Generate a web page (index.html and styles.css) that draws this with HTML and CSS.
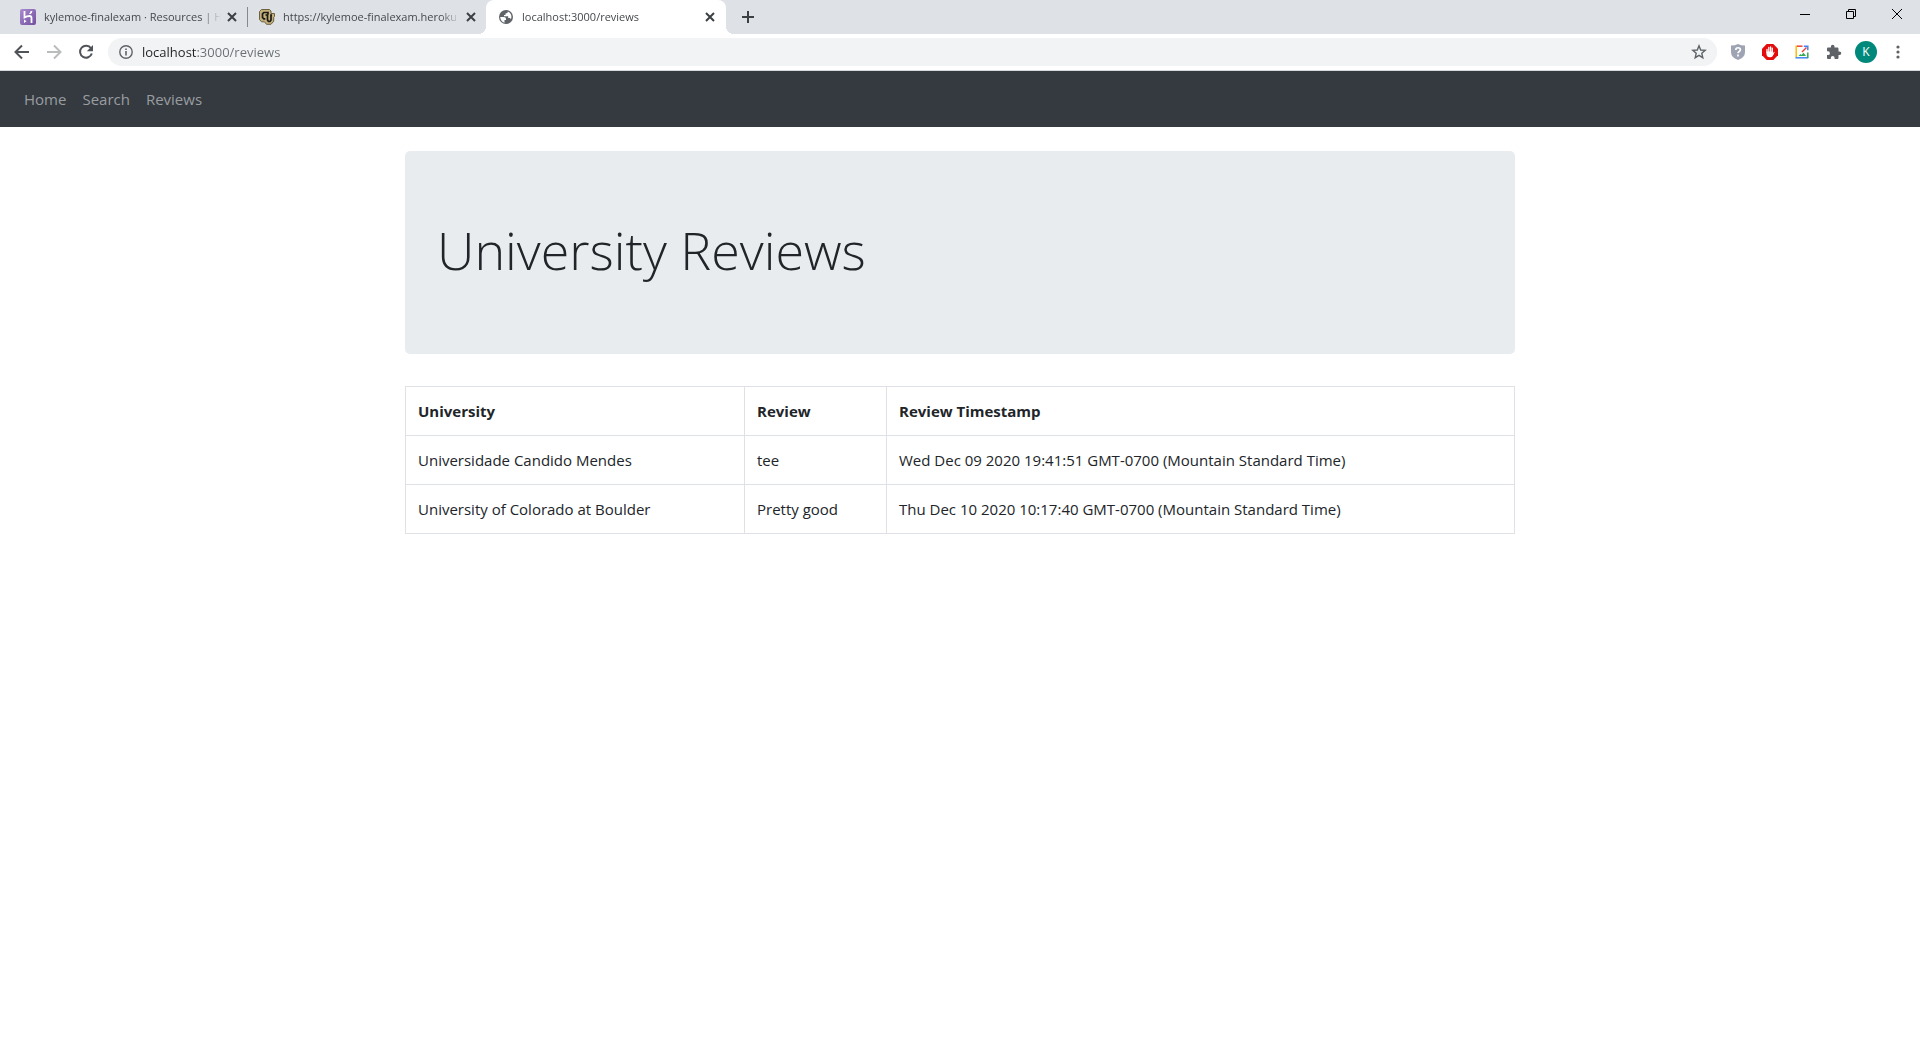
FILE: index.html
```html
<!DOCTYPE html>
<html lang="en">
<head>
<meta charset="utf-8">
<meta name="viewport" content="width=device-width, initial-scale=1">
<title>University Reviews</title>
<link rel="stylesheet" href="styles.css">
</head>
<body>
<div class="browser">
  <div class="tabstrip">
    <div class="tab">
      <svg class="icon" width="16" height="16" viewBox="0 0 16 16"><defs><linearGradient id="hg" x1="0" y1="0" x2="1" y2="1"><stop offset="0" stop-color="#a98bd0"/><stop offset="1" stop-color="#73509f"/></linearGradient></defs><rect width="16" height="16" rx="2" fill="url(#hg)"/><path d="M4.500 2v6.500C6 7.600 8 7 9.500 7 11 7 11.500 7.800 11.500 9v5" fill="none" stroke="#fff" stroke-width="1.800"/><path d="M4 10.500 6.500 12.300 4 14zM9 5c1-1 1.500-2 1.600-3h1.800c-.2 1.300-.8 2.200-1.500 3z" fill="#fff"/></svg>
      <button class="tab-title">kylemoe-finalexam · Resources | H</button>
      <button class="tab-close" aria-label="Close tab"><svg width="10" height="10" viewBox="0 0 10 10"><path d="M1 1l8 8M9 1l-8 8"/></svg></button>
    </div>
    <div class="tab divided">
      <svg class="icon" width="16" height="16" viewBox="0 0 16 16"><path d="M2.500.5h8l1.500 1.500v2.500h3.500v3l-.8.8v4l-2.700 3H7.500l-2-2.500H2.500L.5 10.500v-8z" fill="#c3b07a" stroke="#6b6040" stroke-width="1"/><path d="M9 5.500V3.500H4.800L3.500 4.800v3.700l1.300 1.300h1.500M6.500 6h2v5l1 1.500h1.500l1-1.500V6H13" fill="none" stroke="#1c1a16" stroke-width="1.700"/></svg>
      <button class="tab-title">https://kylemoe-finalexam.heroku</button>
      <button class="tab-close" aria-label="Close tab"><svg width="10" height="10" viewBox="0 0 10 10"><path d="M1 1l8 8M9 1l-8 8"/></svg></button>
    </div>
    <div class="tab active">
      <svg class="icon" width="16" height="16" viewBox="0 0 16 16"><circle cx="8" cy="8" r="7" fill="#5f6368"/><path d="M2.200 8h3.600c1.500 0 2.200.7 2.200 2v1H6.500v2.800C4 13.300 2.300 11 2.200 8zM9.800 2.500C9.800 4 9 4.400 7.500 4.400V6H6v1.200h4.200v1.900h1.300c.8 0 1.200.6 1.200 1.300 1.600-2.800.6-6.500-2.900-7.900z" fill="#fff"/></svg>
      <button class="tab-title">localhost:3000/reviews</button>
      <button class="tab-close" aria-label="Close tab"><svg width="10" height="10" viewBox="0 0 10 10"><path d="M1 1l8 8M9 1l-8 8"/></svg></button>
    </div>
    <button class="new-tab" aria-label="New tab"><svg width="12" height="12" viewBox="0 0 12 12"><path d="M6 0v12M0 6h12" stroke="#3c4043" stroke-width="2"/></svg></button>
    <div class="window-controls">
      <button aria-label="Minimize"><svg width="10" height="10" viewBox="0 0 10 10"><path d="M0 5.500h10"/></svg></button>
      <button aria-label="Restore"><svg width="10" height="10" viewBox="0 0 10 10"><path d="M.5 2.500h7v7h-7zM2.500 2.500v-2h7v7h-2"/></svg></button>
      <button aria-label="Close"><svg width="10" height="10" viewBox="0 0 10 10"><path d="M0 0l10 10M10 0L0 10"/></svg></button>
    </div>
  </div>

  <div class="toolbar">
    <button class="tool" aria-label="Back"><svg width="16" height="16" viewBox="0 0 16 16"><path d="M15 8H2M8 1.500 1.500 8 8 14.500" fill="none" stroke="#505458" stroke-width="2"/></svg></button>
    <button class="tool" aria-label="Forward"><svg width="16" height="16" viewBox="0 0 16 16"><path d="M1 8h13M8 1.500 14.500 8 8 14.500" fill="none" stroke="#babcbe" stroke-width="2"/></svg></button>
    <button class="tool" aria-label="Reload"><svg width="16" height="16" viewBox="0 0 16 16"><path d="M13 4.300A6 6 0 1 0 13.800 9.500" fill="none" stroke="#505458" stroke-width="2"/><path d="M15 1v6.200H8.800z" fill="#505458"/></svg></button>
    <div class="omnibox">
      <svg width="14" height="14" viewBox="0 0 14 14"><circle cx="7" cy="7" r="6.200" fill="none" stroke="#5f6368" stroke-width="1.400"/><path d="M7 6v4.500M7 3.500v1.500" stroke="#5f6368" stroke-width="1.600"/></svg>
      <input class="url" type="text" aria-label="Address" value="localhost:3000/reviews">
      <button class="star" aria-label="Bookmark"><svg width="16" height="16" viewBox="0 0 16 16"><path d="M8 1.800 9.700 6l4.500.4-3.400 2.900 1 4.400L8 11.400l-3.800 2.300 1-4.400L1.800 6.400 6.300 6z" fill="none" stroke="#5f6368" stroke-width="1.400"/></svg></button>
    </div>
    <div class="extensions">
      <button aria-label="Site safety"><svg width="16" height="16" viewBox="0 0 16 16"><path d="M1 1.500Q5 1.500 8 0q3 1.500 7 1.500V8q0 5.500-7 8-7-2.500-7-8z" fill="#9fa4b4"/><path d="M5.800 6c0-3 4.600-2.900 4.600-.2 0 1.700-2.400 1.600-2.400 3.500M8 10.600v1.800" fill="none" stroke="#fff" stroke-width="1.700"/></svg></button>
      <button aria-label="Ad blocker"><svg width="16" height="16" viewBox="0 0 16 16"><path d="M4.700 0h6.600L16 4.700v6.600L11.300 16H4.700L0 11.300V4.700z" fill="#e40d0d"/><path d="M5 8.500V5.500M6.800 8V3.500M8.600 8V3M10.300 8V4.200" stroke="#fff" stroke-width="1.300" stroke-linecap="round"/><path d="M4.400 7.500h6.500v2l1-1.700q.9-.4.700.5L10.800 12Q10 13.200 8 13.200c-2.700 0-3.600-1.500-3.600-3.700z" fill="#fff"/></svg></button>
      <button aria-label="Image tool"><svg width="16" height="16" viewBox="0 0 16 16" fill="none"><path d="M8.500 2.200H3" stroke="#ea4335" stroke-width="1.500"/><path d="M2.200 1.500v12" stroke="#fbbc05" stroke-width="1.500"/><path d="M1.500 13.800h12.700" stroke="#4285f4" stroke-width="1.500"/><path d="M13.800 8.500v5.500" stroke="#34a853" stroke-width="1.500"/><path d="M4.500 12l2-2 1 1 2-2.200L12 12z" fill="#34a853"/><path d="M8 8l4.500-4.500" stroke="#ea4335" stroke-width="1.500"/><path d="M9.800 2.200h4v4" stroke="#4285f4" stroke-width="1.500"/></svg></button>
      <button aria-label="Extensions"><svg width="16" height="16" viewBox="0 0 16 16"><path d="M13.500 7.500h-1V4.800c0-.8-.6-1.300-1.300-1.300H8.500v-1a1.800 1.800 0 0 0-3.600 0v1H2.300C1.500 3.500 1 4 1 4.800v2.500h1a1.900 1.900 0 0 1 0 3.800H1v2.600c0 .8.500 1.300 1.300 1.300h2.500v-1a1.900 1.900 0 0 1 3.800 0v1h2.600c.7 0 1.300-.5 1.300-1.300V11h1a1.750 1.750 0 0 0 0-3.500z" fill="#5f6368"/></svg></button>
      <button class="avatar" aria-label="Profile">K</button>
      <button aria-label="Menu"><svg width="16" height="16" viewBox="0 0 16 16" fill="#5f6368"><circle cx="8" cy="3" r="1.600"/><circle cx="8" cy="8" r="1.600"/><circle cx="8" cy="13" r="1.600"/></svg></button>
    </div>
  </div>
</div>

<nav class="navbar">
  <a href="#">Home</a>
  <a href="#">Search</a>
  <a href="#">Reviews</a>
</nav>

<main class="container">
  <header class="jumbotron"><h1>University Reviews</h1></header>
  <table class="reviews">
    <colgroup><col class="col-university"><col class="col-review"><col></colgroup>
    <thead>
      <tr><th scope="col">University</th><th scope="col">Review</th><th scope="col">Review Timestamp</th></tr>
    </thead>
    <tbody>
      <tr><td>Universidade Candido Mendes</td><td>tee</td><td>Wed Dec 09 2020 19:41:51 GMT-0700 (Mountain Standard Time)</td></tr>
      <tr><td>University of Colorado at Boulder</td><td>Pretty good</td><td>Thu Dec 10 2020 10:17:40 GMT-0700 (Mountain Standard Time)</td></tr>
    </tbody>
  </table>
</main>
</body>
</html>
```
FILE: styles.css
```css
* { box-sizing: border-box; }

body {
  margin: 0;
  background: #fff;
  color: #212529;
  font: 15px/24px "Segoe UI", "Open Sans", sans-serif;
}

button {
  display: flex;
  align-items: center;
  justify-content: center;
  flex: none;
  padding: 0;
  border: 0;
  background: none;
  color: inherit;
  font: inherit;
}

svg { display: block; flex: none; }

/* Browser frame */
.browser { border-bottom: 1px solid #d5d8dc; }

.tabstrip {
  display: flex;
  height: 34px;
  padding-left: 8px;
  background: #dee1e6;
}

.tab {
  position: relative;
  display: flex;
  align-items: center;
  width: 239px;
  padding: 0 10px 0 12px;
  color: #45494d;
  font-size: 11px;
  line-height: 16px;
}

.tab.divided::before {
  content: "";
  position: absolute;
  left: 0;
  top: 7px;
  width: 1px;
  height: 20px;
  background: #85888c;
}

.tab.active {
  width: 240px;
  padding-right: 11px;
  border-radius: 8px 8px 0 0;
  background: #fff;
}

.tab.active::before,
.tab.active::after {
  content: "";
  position: absolute;
  bottom: 0;
  width: 8px;
  height: 8px;
}

.tab.active::before {
  right: 100%;
  background: radial-gradient(circle at 0 0, transparent 8px, #fff 8px);
}

.tab.active::after {
  left: 100%;
  background: radial-gradient(circle at 100% 0, transparent 8px, #fff 8px);
}

.tab-title {
  flex: 1;
  min-width: 0;
  margin: 0 2px 0 8px;
  justify-content: flex-start;
  white-space: nowrap;
  -webkit-mask-image: linear-gradient(to left, transparent 4px, #000 24px);
  mask-image: linear-gradient(to left, transparent 4px, #000 24px);
}

.tab-close { stroke: #3c4043; stroke-width: 2; }

.new-tab { width: 28px; margin-left: 8px; }

.window-controls {
  display: flex;
  margin-left: auto;
  height: 28px;
  fill: none;
  stroke: #000;
}

.window-controls button { width: 46px; }

.toolbar {
  display: flex;
  align-items: center;
  height: 36px;
  padding: 0 6px;
}

.tool { width: 32px; height: 28px; }

.omnibox {
  display: flex;
  flex: 1;
  align-items: center;
  height: 28px;
  margin-left: 6px;
  padding: 0 10px 0 11px;
  border-radius: 14px;
  background: #f1f3f4;
}

.url {
  flex: 1;
  min-width: 0;
  height: 28px;
  margin-left: 9px;
  padding: 0;
  border: 0;
  outline: 0;
  background: linear-gradient(to right, #202124 55px, #6a6e73 55px);
  -webkit-background-clip: text;
  background-clip: text;
  -webkit-text-fill-color: transparent;
  font: 13px/20px "Segoe UI", "Open Sans", sans-serif;
}

.extensions {
  display: flex;
  align-items: center;
  gap: 16px;
  padding: 0 8px 0 13px;
}

.avatar {
  width: 22px;
  height: 22px;
  margin: 0 -3px;
  border-radius: 50%;
  background: #00897b;
  color: #fff;
  font-size: 12px;
}

/* Page */
.navbar {
  display: flex;
  align-items: center;
  height: 56px;
  padding: 0 16px;
  background: #343a40;
}

.navbar a {
  padding: 8px;
  color: #9a9da0;
  text-decoration: none;
}

.container {
  max-width: 1140px;
  margin: 0 auto;
  padding: 24px 15px;
}

.jumbotron {
  margin-bottom: 32px;
  padding: 64px 32px;
  border-radius: 5px;
  background: #e9ecef;
}

.jumbotron h1 {
  margin: 0 0 6px;
  font-size: 52px;
  font-weight: 300;
  line-height: 69px;
}

.reviews {
  width: 100%;
  border-collapse: collapse;
}

.col-university { width: 339px; }
.col-review { width: 142px; }

.reviews th,
.reviews td {
  padding: 12px;
  border: 1px solid #dee2e6;
  text-align: left;
}
```
